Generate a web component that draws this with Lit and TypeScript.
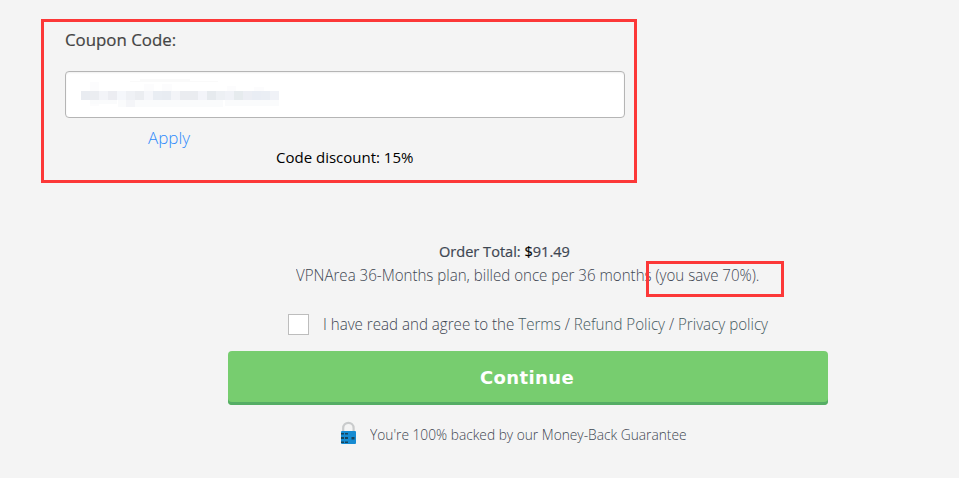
import { LitElement, html, css, svg } from "lit";
import { customElement } from "lit/decorators.js";

const MASK = ["#e9ecf1","#ebedf1","#f3f4f8","#ecedf2","#f5f7fb","#eff1f5","#ebedf1","#f5f6fa","#e9edf3","#e8ecf2","#f3f4f8","#eaecf0","#eaecf0","#f3f4f9","#e6eaee","#edf0f4","#f0f2f7","#e6ebee","#eceef4","#e9edf4","#eaeef4","#f0f2f7"];

@customElement("app-root")
export class AppRoot extends LitElement {
  static styles = css`
    * { box-sizing: border-box; }
    :host { display: block; height: 478px; overflow: hidden; background: #f4f4f4; padding-top: 19px;
      font: 300 16px/24px "Open Sans", "Noto Sans", sans-serif; color: #3e4652; white-space: nowrap; }
    .text { display: inline-block; transform-origin: 0 50%; }
    .coupon { width: 596px; height: 164px; margin-left: 41px; border: 3px solid #fc3838; padding: 6px 9px 0 21px; }
    .label { height: 43px; font-size: 17px; font-weight: 500; color: #444; }
    .label .text { transform: scaleX(.99); -webkit-text-stroke: .2px #444; }
    .field { width: 560px; height: 47px; border: 1px solid #b5b5b5; border-radius: 4px; background: #fff;
      box-shadow: inset 0 1px 2px #0001; }
    .mask { display: block; margin: 7px 0 0 4px; }
    .apply { height: 20px; margin: 9px 0 0 83px; line-height: 21px; font-size: 17px; color: #2f8bfb; }
    .discount { height: 20px; margin-left: 211px; line-height: 21px; font-size: 15px; font-weight: 400; color: #000; }
    .total { height: 24px; margin: 56px 0 0 439px; font-size: 15px; font-weight: 500; }
    .total .text { transform: scaleX(.971); -webkit-text-stroke: .2px; }
    .total b { color: #000; font-weight: 500; }
    .plan { position: relative; height: 24px; margin-left: 296px; }
    .plan .text { transform: scaleX(.943); }
    .mark { position: absolute; left: 350px; top: -2px; width: 138px; height: 36px; border: 3px solid #fc3838; }
    .agree { display: flex; align-items: center; height: 24px; margin: 25px 0 0 288px; }
    .agree .text { transform: scaleX(.945); }
    .check { width: 21px; height: 21px; margin-right: 14px; border: 1px solid #bdbdbd; background: #fff; }
    .link { color: #455a60; }
    .go { display: block; width: 600px; height: 54px; margin: 15px 0 0 228px; padding: 0 2px 0 0; border: 0; border-radius: 4px;
      background: #77cd6f; box-shadow: inset 0 -3px #55ad65; color: #fff; font: bold 18px/54px "DejaVu Sans", sans-serif; letter-spacing: .4px; }
    .backed { display: flex; height: 30px; margin: 15px 0 0 340px; line-height: 28px; font-size: 15px; }
    .backed .text { transform: scaleX(.916); }
    .lock { width: 17px; height: 24px; margin: 1px 12.500px 0 0; }
  `;

  render() {
    return html`
      <section class="coupon">
        <div class="label"><span class="text">Coupon Code:</span></div>
        <div class="field">
          <svg class="mask" width="214" height="30">
            <path d="M70 0h50v2H70zM60 2h88v1H60z" fill="#fafafa"/>
            <path d="M20 3h9v24h-9zM74 5h10v7H74zM92 5h10v7H92zM157 7h9v5h-9zM184 8h10v4h-10z" fill="#fcfcfd"/>
            <path d="M20 21h27v4H20zM48 21h105v7H48zM155 21h54v6h-54z" fill="#fafbfc"/>
            <path d="M56 21h9v7h-9z" fill="#f4f5f8"/>
            ${MASK.map((c, i) => svg`<rect x=${11 + i * 9} y="11.5" width="9" height="9" fill=${c} shape-rendering="crispEdges"/>`)}
          </svg>
        </div>
        <div class="apply"><span class="text">Apply</span></div>
        <div class="discount"><span class="text">Code discount: 15%</span></div>
      </section>
      <div class="total"><span class="text">Order Total: <b>$</b>91.49</span></div>
      <div class="plan"><span class="text">VPNArea 36-Months plan, billed once per 36 months (you save 70%).</span><i class="mark"></i></div>
      <div class="agree"><i class="check"></i><span class="text">I have read and agree to the <span class="link">Terms</span> / <span class="link">Refund Policy</span> / <span class="link">Privacy policy</span></span></div>
      <button class="go">Continue</button>
      <div class="backed">
        <svg class="lock" viewBox="0 0 17 24">
          <path d="M3.2 12V7a5.2 5.2 0 0 1 10.4 0v5" fill="none" stroke="#c9cbcc" stroke-width="2.2"/>
          <rect x="1" y="10" width="15" height="13" rx="1" fill="#168bd2"/>
          <path d="M1 12h3v1.5H1zM5 12h3v1.5H5zM1 16h3v2H1zM5 16h3v2H5zM1 20.5h3V22H1zM5 20.5h3V22H5zM11.500 16h3v2.500h-3z" fill="#17445b"/>
        </svg>
        <span class="text">You're 100% backed by our Money-Back Guarantee</span>
      </div>`;
  }
}
